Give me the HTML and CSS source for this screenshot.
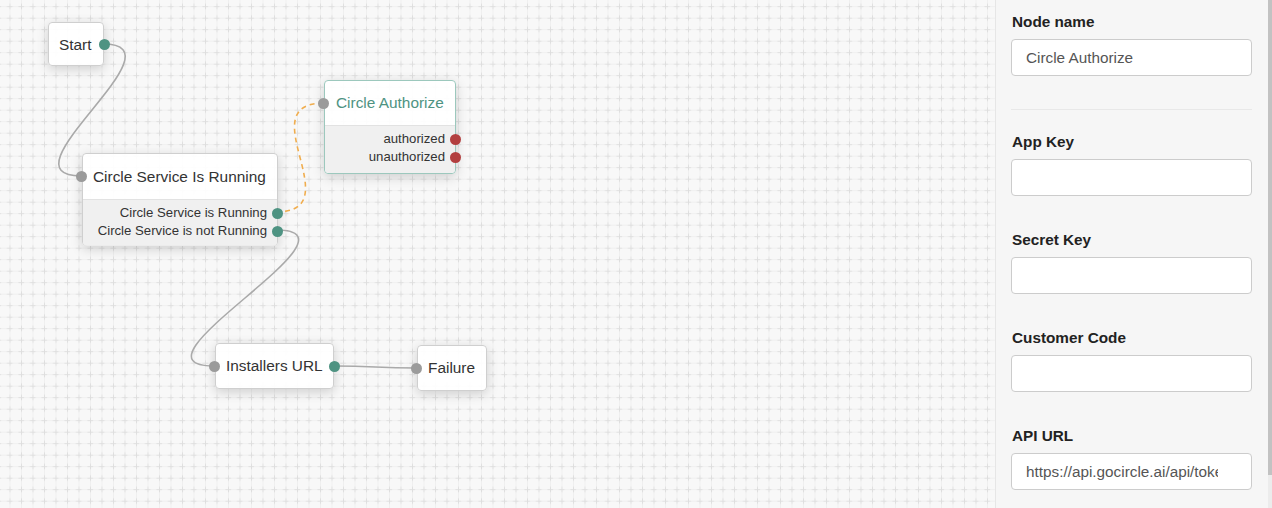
FILE: index.html
```html
<!DOCTYPE html>
<html>
<head>
<meta charset="utf-8">
<link rel="stylesheet" href="styles.css">
</head>
<body>
<div class="app">
  <div class="canvas">
    <svg class="canvas-bg" width="995" height="508" xmlns="http://www.w3.org/2000/svg">
      <defs>
        <pattern id="grid" x="9.5" y="6.2" width="11.5" height="11.5" patternUnits="userSpaceOnUse">
          <line x1="0" y1="0.5" x2="11.5" y2="0.5" stroke="#efefef" stroke-width="1"/>
          <line x1="0.5" y1="0" x2="0.5" y2="11.5" stroke="#efefef" stroke-width="1"/>
          <line x1="0" y1="0.5" x2="3" y2="0.5" stroke="#dedede" stroke-width="1"/>
          <line x1="0.5" y1="0" x2="0.5" y2="3" stroke="#dedede" stroke-width="1"/>
          <line x1="9" y1="0.5" x2="11.5" y2="0.5" stroke="#dedede" stroke-width="1"/>
          <line x1="0.5" y1="9" x2="0.5" y2="11.5" stroke="#dedede" stroke-width="1"/>
        </pattern>
      </defs>
      <rect width="995" height="508" fill="#f8f8f8"/>
      <rect width="995" height="508" fill="url(#grid)"/>
      <path d="M103 44 C 188 44, -4 176, 81 176" fill="none" stroke="#aaaaaa" stroke-width="1.6"/>
      <path d="M276 230 C 374 230, 116 366, 214 366" fill="none" stroke="#aaaaaa" stroke-width="1.6"/>
      <path d="M335 366 C 375 366, 376 368, 416 368" fill="none" stroke="#aaaaaa" stroke-width="1.6"/>
      <path d="M276 212 C 352 212, 248 103, 324 103" fill="none" stroke="#f0ad4e" stroke-width="1.6" stroke-dasharray="5 4"/>
    </svg>

    <div class="node node-start">
      <div class="node-head">Start</div>
      <span class="port port-out teal port-mid"></span>
    </div>

    <div class="node node-csir">
      <div class="node-head">
        <span class="port port-in gray port-mid"></span>
        Circle Service Is Running
      </div>
      <div class="node-body">
        <div class="out-row">Circle Service is Running<span class="port port-out teal port-row"></span></div>
        <div class="out-row">Circle Service is not Running<span class="port port-out teal port-row"></span></div>
      </div>
    </div>

    <div class="node node-auth">
      <div class="node-head title-teal">
        <span class="port port-in gray port-mid"></span>
        Circle Authorize
      </div>
      <div class="node-body">
        <div class="out-row">authorized<span class="port port-out red port-row"></span></div>
        <div class="out-row">unauthorized<span class="port port-out red port-row"></span></div>
      </div>
    </div>

    <div class="node node-inst">
      <div class="node-head">Installers URL</div>
      <span class="port port-in gray port-mid"></span>
      <span class="port port-out teal port-mid"></span>
    </div>

    <div class="node node-fail">
      <div class="node-head">Failure</div>
      <span class="port port-in gray port-mid"></span>
    </div>
  </div>

  <div class="panel">
    <div class="panel-body">
      <div class="field first">
        <label class="label">Node name</label>
        <input class="input" type="text" value="Circle Authorize">
      </div>
      <div class="divider"></div>
      <div class="field after-divider">
        <label class="label">App Key</label>
        <input class="input" type="text" value="">
      </div>
      <div class="field">
        <label class="label">Secret Key</label>
        <input class="input" type="text" value="">
      </div>
      <div class="field">
        <label class="label">Customer Code</label>
        <input class="input" type="text" value="">
      </div>
      <div class="field">
        <label class="label">API URL</label>
        <input class="input input-url" type="text" value="https://api.gocircle.ai/api/token">
      </div>
    </div>
    <div class="scrollbar"><div class="thumb"></div></div>
  </div>
</div>
</body>
</html>
```

FILE: styles.css
```css
* { box-sizing: border-box; }
html, body {
  margin: 0;
  padding: 0;
  width: 1272px;
  height: 508px;
  overflow: hidden;
  font-family: "Liberation Sans", Arial, sans-serif;
  color: #333;
}
.app {
  display: flex;
  width: 1272px;
  height: 508px;
}
.canvas {
  position: relative;
  width: 995px;
  height: 508px;
  flex: none;
  overflow: hidden;
}
.canvas-bg {
  position: absolute;
  left: 0;
  top: 0;
}
.node {
  position: absolute;
  background: rgba(255, 255, 255, 0.92);
  border: 1px solid #cfcfcf;
  border-radius: 4px;
  box-shadow: 0 3px 12px rgba(0, 0, 0, 0.17);
}
.node-head {
  position: relative;
  height: 43px;
  display: flex;
  align-items: center;
  padding-left: 10px;
  font-size: 15.4px;
  color: #333;
  white-space: nowrap;
}
.node-body {
  border-top: 1px solid #e2e2e2;
  background: rgba(238, 238, 238, 0.9);
  padding: 4px 10px 6px 0;
  border-radius: 0 0 4px 4px;
}
.out-row {
  position: relative;
  height: 18px;
  line-height: 18px;
  font-size: 13.2px;
  text-align: right;
  color: #333;
  white-space: nowrap;
}
.port {
  position: absolute;
  width: 11px;
  height: 11px;
  border-radius: 50%;
}
.teal { background: #4e9382; }
.gray { background: #9b9b9b; }
.red { background: #b23f3f; }
.port-mid { top: 50%; margin-top: -5.5px; }
.port-row { top: 3.5px; }
.node-head .port-in, .node > .port-in { left: -7px; }
.node > .port-out { right: -6.5px; }
.out-row .port-out { right: -15.5px; }

.node-start { left: 48px; top: 22px; width: 56px; height: 44px; }
.node-csir { left: 82px; top: 153px; width: 196px; height: 93px; }
.node-csir .node-head { height: 45px; }
.node-auth { left: 324px; top: 80px; width: 132px; height: 94px; border-color: #9cc8bd; }
.node-auth .node-head { height: 44px; padding-left: 11px; }
.node-auth .node-body { padding: 4px 10px 7px 0; }
.title-teal { color: #4e9382; }
.node-inst { left: 215px; top: 343px; width: 119px; height: 46px; }
.node-fail { left: 417px; top: 345px; width: 70px; height: 46px; }

.panel {
  flex: none;
  width: 277px;
  height: 508px;
  display: flex;
  background: #f6f6f6;
  box-shadow: -1px 0 3px rgba(0, 0, 0, 0.08);
  border-left: 1px solid #e6e6e6;
}
.panel-body {
  flex: 1;
  padding: 12px 15px 0 15px;
}
.field { margin-top: 34px; }
.field.first { margin-top: 0; }
.field.after-divider { margin-top: 22px; }
.label {
  display: block;
  font-size: 15.3px;
  font-weight: bold;
  line-height: 20px;
  height: 20px;
  margin-bottom: 7px;
  padding-left: 1px;
  color: #222;
}
.input {
  display: block;
  width: 241px;
  height: 37px;
  border: 1px solid #cccccc;
  border-radius: 4px;
  background: #fff;
  padding: 0 14px;
  font-family: "Liberation Sans", Arial, sans-serif;
  font-size: 15.3px;
  color: #555;
  outline: none;
}
.input-url { padding-right: 33px; }
.divider {
  margin-top: 33px;
  height: 1px;
  width: 241px;
  background: #e8e8e8;
}
.scrollbar {
  flex: none;
  width: 4px;
  height: 508px;
  background: #ececec;
}
.thumb {
  width: 4px;
  height: 475px;
  background: #c2c2c2;
}
```
